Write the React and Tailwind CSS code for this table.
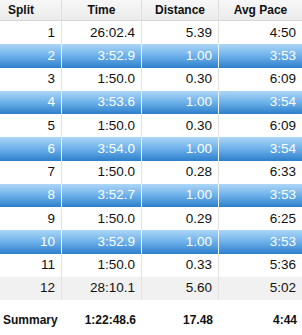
import React from "react";

const splits = [
  ["1", "26:02.4", "5.39", "4:50"],
  ["2", "3:52.9", "1.00", "3:53"],
  ["3", "1:50.0", "0.30", "6:09"],
  ["4", "3:53.6", "1.00", "3:54"],
  ["5", "1:50.0", "0.30", "6:09"],
  ["6", "3:54.0", "1.00", "3:54"],
  ["7", "1:50.0", "0.28", "6:33"],
  ["8", "3:52.7", "1.00", "3:53"],
  ["9", "1:50.0", "0.29", "6:25"],
  ["10", "3:52.9", "1.00", "3:53"],
  ["11", "1:50.0", "0.33", "5:36"],
  ["12", "28:10.1", "5.60", "5:02"],
];

const cols = "grid grid-cols-[62px_80px_77px_83px]";

function Row({ cells, index }) {
  const selected = index % 2 === 1 && index < 10;
  const bg = selected
    ? "bg-gradient-to-b from-[#acd6f6] via-[#6cb0ea] to-[#2b7fcb] text-white"
    : index % 2 === 1
    ? "bg-[#f1f1f1] text-[#111]"
    : "bg-white text-[#111]";
  const divider = selected ? "border-[#e8f3fc]" : "border-[#e2e2e2]";
  return (
    <div className={`${cols} h-[23.25px] ${bg}`}>
      {cells.map((c, i) => (
        <div
          key={i}
          className={`flex items-center justify-end pr-[6px] ${i < 3 ? `border-r ${divider}` : ""}`}
        >
          {c}
        </div>
      ))}
    </div>
  );
}

export default function App() {
  return (
    <div className="w-[302px] h-[335px] bg-white overflow-hidden font-['Liberation_Sans',Arial,sans-serif] text-[13.5px]">
      <div className={`${cols} h-[21px] bg-gradient-to-b from-[#f7f7f7] to-[#ebebeb] border-b border-[#d6d6d6] text-[12px] font-bold text-[#111]`}>
        <div className="flex items-center pl-[8px] border-r border-[#dedede]">Split</div>
        <div className="flex items-center justify-center border-r border-[#dedede]">Time</div>
        <div className="flex items-center justify-center border-r border-[#dedede]">Distance</div>
        <div className="flex items-center justify-center">Avg Pace</div>
      </div>
      {splits.map((r, i) => (
        <Row key={i} cells={r} index={i} />
      ))}
      <div className={`${cols} h-[35px] pt-[4px] text-[12px] font-bold text-[#111]`}>
        <div className="flex items-center pl-[3px]">Summary</div>
        <div className="flex items-center justify-end pr-[6px]">1:22:48.6</div>
        <div className="flex items-center justify-end pr-[6px]">17.48</div>
        <div className="flex items-center justify-end pr-[5px]">4:44</div>
      </div>
    </div>
  );
}
